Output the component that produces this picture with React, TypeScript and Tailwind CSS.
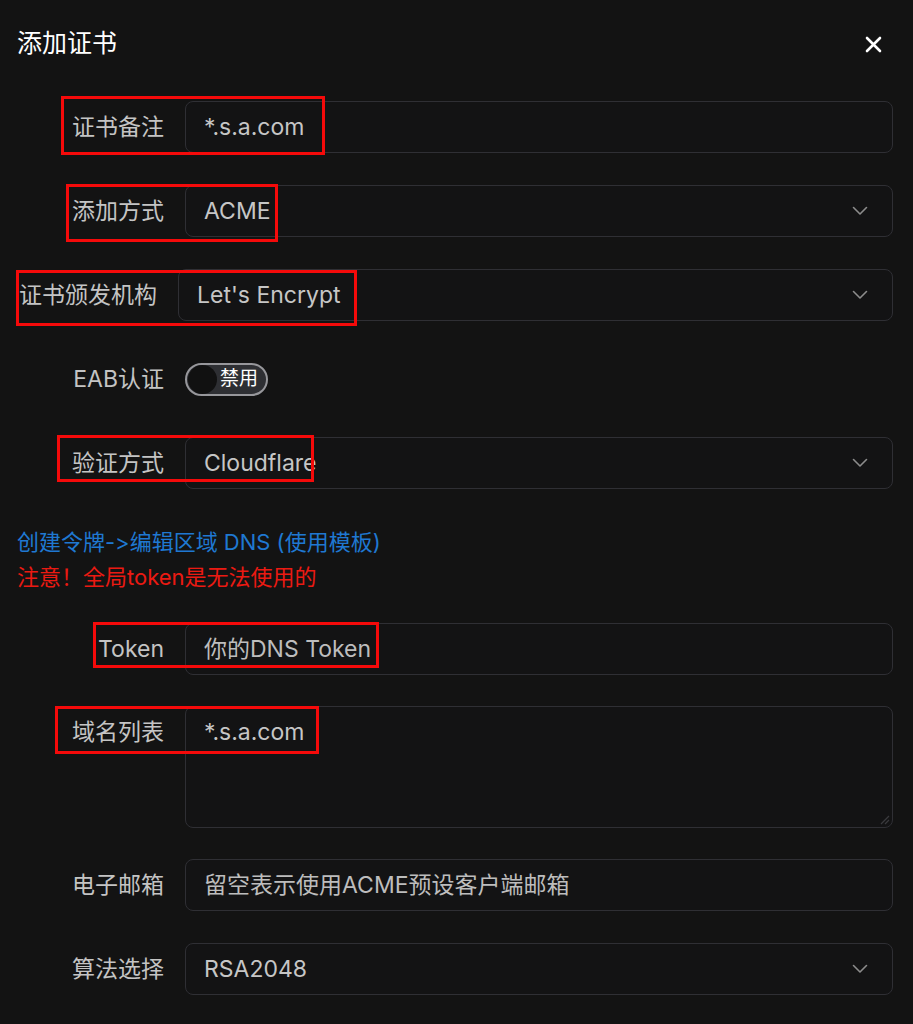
import type { ReactNode } from 'react'

const FONT = "font-['Inter','Noto_Sans_CJK_SC',sans-serif]"

type Mark = { left: number; top: number; width: number; height: number }

function Chevron() {
  return (
    <svg width="16" height="10" viewBox="0 0 16 10" fill="none" className="shrink-0">
      <path d="M1.5 1.5 L8 8 L14.5 1.5" stroke="#8c8c8c" strokeWidth="1.6" strokeLinecap="round" strokeLinejoin="round" />
    </svg>
  )
}

// red annotation box drawn over the row
function Annotation({ mark }: { mark: Mark }) {
  return (
    <div
      className="pointer-events-none absolute border-[3px] border-[#f50a0a]"
      style={{ left: mark.left, top: mark.top, width: mark.width, height: mark.height }}
    />
  )
}

function Row({
  label,
  labelWidth = 'w-[168px]',
  children,
  mark,
  className = '',
}: {
  label: string
  labelWidth?: string
  children: ReactNode
  mark?: Mark
  className?: string
}) {
  return (
    <div className={`relative flex items-start ${className}`}>
      <div className={`${labelWidth} shrink-0 h-[52px] flex items-center justify-end pr-[21px] text-[23px] text-[#c4c4c4] whitespace-nowrap`}>
        {label}
      </div>
      {children}
      {mark && <Annotation mark={mark} />}
    </div>
  )
}

function Field({ value, select, dim }: { value: string; select?: boolean; dim?: boolean }) {
  return (
    <div className="flex-1 h-[52px] rounded-[8px] border border-[#2f2f34] bg-[#131314] flex items-center justify-between pl-[18px] pr-[24px]">
      <span className={`text-[23px] ${dim ? 'text-[#bdbdbd]' : 'text-[#c6c6c6]'}`}>{value}</span>
      {select && <Chevron />}
    </div>
  )
}

export default function App() {
  return (
    <div className={`min-h-[1024px] w-full bg-[#131313] pl-[17px] pr-[20px] pt-[29px] ${FONT} [font-variant-ligatures:none]`}>
      {/* header */}
      <div className="flex h-[30px] items-center justify-between">
        <h1 className="text-[25px] text-white">添加证书</h1>
        <svg width="17" height="17" viewBox="0 0 17 17" className="mr-[11px]">
          <path d="M2 2 L15 15 M15 2 L2 15" stroke="#ffffff" strokeWidth="2.6" strokeLinecap="round" />
        </svg>
      </div>

      <Row label="证书备注" className="mt-[42px]" mark={{ left: 44, top: -5, width: 264, height: 59 }}>
        <Field value="*.s.a.com" />
      </Row>

      <Row label="添加方式" className="mt-[32px]" mark={{ left: 49, top: -1, width: 212, height: 58 }}>
        <Field value="ACME" select />
      </Row>

      <Row label="证书颁发机构" labelWidth="w-[161px]" className="mt-[32px]" mark={{ left: -1, top: 1, width: 341, height: 56 }}>
        <Field value="Let's Encrypt" select />
      </Row>

      <Row label="EAB认证" className="mt-[32px]">
        <div className="h-[52px] flex items-center">
          <div className="flex h-[33px] w-[83px] items-center rounded-full border-2 border-[#97979b] bg-[#2e2f33] pl-[1px]">
            <div className="h-[29px] w-[29px] rounded-full bg-[#111111]" />
            <span className="ml-[3px] text-[19px] text-white">禁用</span>
          </div>
        </div>
      </Row>

      <Row label="验证方式" className="mt-[32px]" mark={{ left: 40, top: -2, width: 257, height: 47 }}>
        <Field value="Cloudflare" select />
      </Row>

      <div className="mt-[36px] text-[22px] leading-[35px]">
        <p className="text-[#1f78d1]">创建令牌-&gt;编辑区域 DNS (使用模板)</p>
        <p className="text-[#eb1a12]">注意！全局token是无法使用的</p>
      </div>

      <Row label="Token" className="mt-[28px]" mark={{ left: 76, top: -1, width: 286, height: 46 }}>
        <Field value="你的DNS Token" dim />
      </Row>

      <Row label="域名列表" className="mt-[31px]" mark={{ left: 38, top: 0, width: 264, height: 48 }}>
        <div className="relative flex-1 h-[122px] rounded-[8px] border border-[#2f2f34] bg-[#131314] pl-[18px]">
          <div className="flex h-[50px] items-center text-[23px] text-[#c6c6c6]">*.s.a.com</div>
          <svg width="10" height="10" viewBox="0 0 10 10" className="absolute bottom-[2px] right-[2px]">
            <path d="M9 1 L1 9 M9 5 L5 9" stroke="#3a3a3e" strokeWidth="1.2" />
          </svg>
        </div>
      </Row>

      <Row label="电子邮箱" className="mt-[31px]">
        <Field value="留空表示使用ACME预设客户端邮箱" dim />
      </Row>

      <Row label="算法选择" className="mt-[32px]">
        <Field value="RSA2048" select />
      </Row>
    </div>
  )
}
